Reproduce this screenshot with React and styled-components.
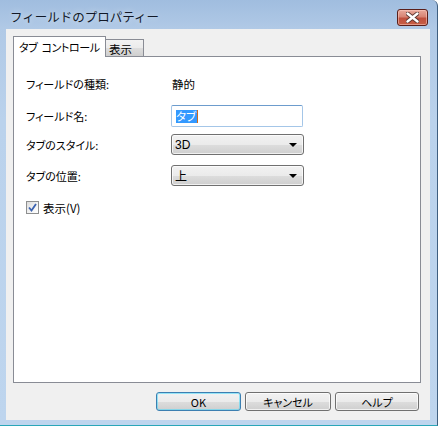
import React from 'react';
import styled, { createGlobalStyle } from 'styled-components';

const Global = createGlobalStyle`
  html, body { margin: 0; padding: 0; background: #ffffff; }
  body { font-family: "Noto Sans CJK JP", "Noto Sans", sans-serif; }
`;

const Window = styled.div`
  width: 437px;
  height: 425px;
  border-right: 1px solid #3f5f80;
  border-bottom: 1px solid #2aa6b8;
  border-top-right-radius: 6px;
  background: linear-gradient(to bottom, #a0bddf 0px, #b0c9e6 28px, #bad2ec 120px, #bed5ee 100%);
  display: flex;
  flex-direction: column;
  box-sizing: content-box;
`;

const TitleBar = styled.div`
  height: 29px;
  display: flex;
  justify-content: space-between;
  align-items: flex-start;
  padding: 0 9px 0 10px;
  box-sizing: border-box;
`;

const Title = styled.div`
  margin-top: 8px;
  font-size: 12.5px;
  line-height: 17px;
  color: #111827;
  text-shadow: 0 0 6px rgba(255, 255, 255, 0.7);
`;

const CloseButton = styled.div`
  margin-top: 9px;
  width: 31px;
  height: 17px;
  box-sizing: border-box;
  border: 1px solid #5a1f1a;
  border-radius: 3px;
  background: linear-gradient(to bottom, #e9a99c 0%, #d88474 45%, #c0503e 55%, #c75f46 100%);
  box-shadow: inset 0 0 0 1px rgba(255, 210, 200, 0.5);
  display: flex;
  align-items: center;
  justify-content: center;
`;

const Client = styled.div`
  flex: 1;
  margin: 0 7px 5px 6px;
  background: #f0f0f0;
  display: flex;
  flex-direction: column;
  padding: 7px 9px 9px 7px;
  box-sizing: border-box;
`;

const TabStrip = styled.div`
  height: 20px;
  display: flex;
  align-items: flex-end;
`;

const Tab = styled.div`
  position: relative;
  box-sizing: border-box;
  border: 1px solid #898c95;
  border-bottom: none;
  font-size: 11px;
  color: #000;
  display: flex;
  align-items: center;
  white-space: pre;
  font-feature-settings: "palt";
  ${(p) =>
    p.$active
      ? `
    z-index: 1;
    width: 93px;
    height: 21px;
    margin-bottom: -1px;
    background: #ffffff;
    padding: 0 0 1px 5px;
    letter-spacing: -0.4px;
  `
      : `
    width: 39px;
    height: 17px;
    margin-left: -1px;
    background: linear-gradient(to bottom, #f2f2f2 0%, #ebebeb 50%, #dddddd 51%, #cfcfcf 100%);
    padding: 1px 0 0 3px;
    font-size: 11.5px;
  `}
`;

const TabGap = styled.span`
  display: inline-block;
  width: 4px;
`;

const Panel = styled.div`
  flex: 1;
  background: #ffffff;
  border: 1px solid #898c95;
  display: flex;
  flex-direction: column;
  padding: 16px 0 0 12px;
`;

const Row = styled.div`
  display: flex;
  align-items: center;
  height: ${(p) => p.$h}px;
  margin-top: ${(p) => p.$mt}px;
`;

const Label = styled.div`
  width: 145px;
  font-size: 11px;
  color: #000;
  font-feature-settings: "palt";
  white-space: nowrap;
`;

const Value = styled.div`
  font-size: 11.5px;
  color: #000;
  padding-left: 1px;
`;

const TextBox = styled.div`
  width: 132px;
  height: 22px;
  box-sizing: border-box;
  border: 1px solid #a4c6e8;
  border-top-color: #6d9ccd;
  border-radius: 2px;
  background: #fff;
  display: flex;
  align-items: center;
  padding-left: 4px;
`;

const Selected = styled.span`
  background: #3399ff;
  color: #fff;
  font-size: 11.5px;
  line-height: 13px;
  padding: 0 1px 0 0;
  font-feature-settings: "palt";
`;

const Caret = styled.span`
  display: inline-block;
  width: 1px;
  height: 13px;
  background: #cc6a1e;
`;

const Select = styled.div`
  width: 133px;
  height: 21px;
  box-sizing: border-box;
  border: 1px solid #707070;
  border-radius: 3px;
  background: linear-gradient(to bottom, #f2f2f2 0%, #ebebeb 50%, #dddddd 51%, #cfcfcf 100%);
  box-shadow: inset 0 0 0 1px rgba(255, 255, 255, 0.7);
  display: flex;
  align-items: center;
  justify-content: space-between;
  padding: 0 6px 0 3px;
  font-size: 12px;
  color: #000;
  font-family: "Liberation Sans", "Noto Sans CJK JP", sans-serif;
`;

const Arrow = styled.span`
  width: 0;
  height: 0;
  border-left: 4px solid transparent;
  border-right: 4px solid transparent;
  border-top: 4px solid #000;
`;

const CheckBox = styled.div`
  width: 13px;
  height: 13px;
  box-sizing: border-box;
  border: 1px solid #8e8f8f;
  background: linear-gradient(135deg, #dcdcdc 0%, #f4f4f4 60%, #ffffff 100%);
  display: flex;
  align-items: center;
  justify-content: center;
  margin-right: 4px;
`;

const CheckLabel = styled.span`
  font-size: 11.5px;
  color: #000;
  font-feature-settings: "palt";
`;

const ButtonRow = styled.div`
  margin-top: 9px;
  display: flex;
  justify-content: flex-end;
  gap: 4px;
  padding-right: 2px;
`;

const Button = styled.div`
  width: ${(p) => p.$w}px;
  height: 19px;
  box-sizing: border-box;
  border: 1px solid ${(p) => (p.$default ? '#3c7fb1' : '#707070')};
  border-radius: 3px;
  background: linear-gradient(to bottom, #f2f2f2 0%, #ebebeb 50%, #dddddd 51%, #cfcfcf 100%);
  box-shadow: inset 0 0 0 1px ${(p) => (p.$default ? 'rgba(72, 216, 251, 0.55)' : 'rgba(255, 255, 255, 0.7)')};
  display: flex;
  align-items: center;
  justify-content: center;
  font-size: 11px;
  color: #000;
  font-feature-settings: "palt";
`;

export default function App() {
  return (
    <>
      <Global />
      <Window>
        <TitleBar>
          <Title>フィールドのプロパティー</Title>
          <CloseButton>
            <svg width="13" height="11" viewBox="0 0 13 11">
              <path d="M1.5 1.5 L11.5 9.5 M11.5 1.5 L1.5 9.5" stroke="#5a3530" strokeWidth="4.2" strokeLinecap="round" />
              <path d="M1.5 1.5 L11.5 9.5 M11.5 1.5 L1.5 9.5" stroke="#ffffff" strokeWidth="2.4" strokeLinecap="round" />
            </svg>
          </CloseButton>
        </TitleBar>
        <Client>
          <TabStrip>
            <Tab $active>タブ<TabGap />コントロール</Tab>
            <Tab>表示</Tab>
          </TabStrip>
          <Panel>
            <Row $h={22} $mt={0}>
              <Label>フィールドの種類:</Label>
              <Value>静的</Value>
            </Row>
            <Row $h={22} $mt={10}>
              <Label>フィールド名:</Label>
              <TextBox>
                <Selected>タブ</Selected>
                <Caret />
              </TextBox>
            </Row>
            <Row $h={21} $mt={7}>
              <Label>タブのスタイル:</Label>
              <Select>
                <span>3D</span>
                <Arrow />
              </Select>
            </Row>
            <Row $h={21} $mt={10}>
              <Label>タブの位置:</Label>
              <Select>
                <span>上</span>
                <Arrow />
              </Select>
            </Row>
            <Row $h={21} $mt={11}>
              <CheckBox>
                <svg width="9" height="9" viewBox="0 0 9 9">
                  <path d="M1 4.5 L3.5 7.5 L8 1" fill="none" stroke="#3b62b0" strokeWidth="1.8" />
                </svg>
              </CheckBox>
              <CheckLabel>表示(V)</CheckLabel>
            </Row>
          </Panel>
          <ButtonRow>
            <Button $w={85} $default>OK</Button>
            <Button $w={86}>キャンセル</Button>
            <Button $w={84}>ヘルプ</Button>
          </ButtonRow>
        </Client>
      </Window>
    </>
  );
}
